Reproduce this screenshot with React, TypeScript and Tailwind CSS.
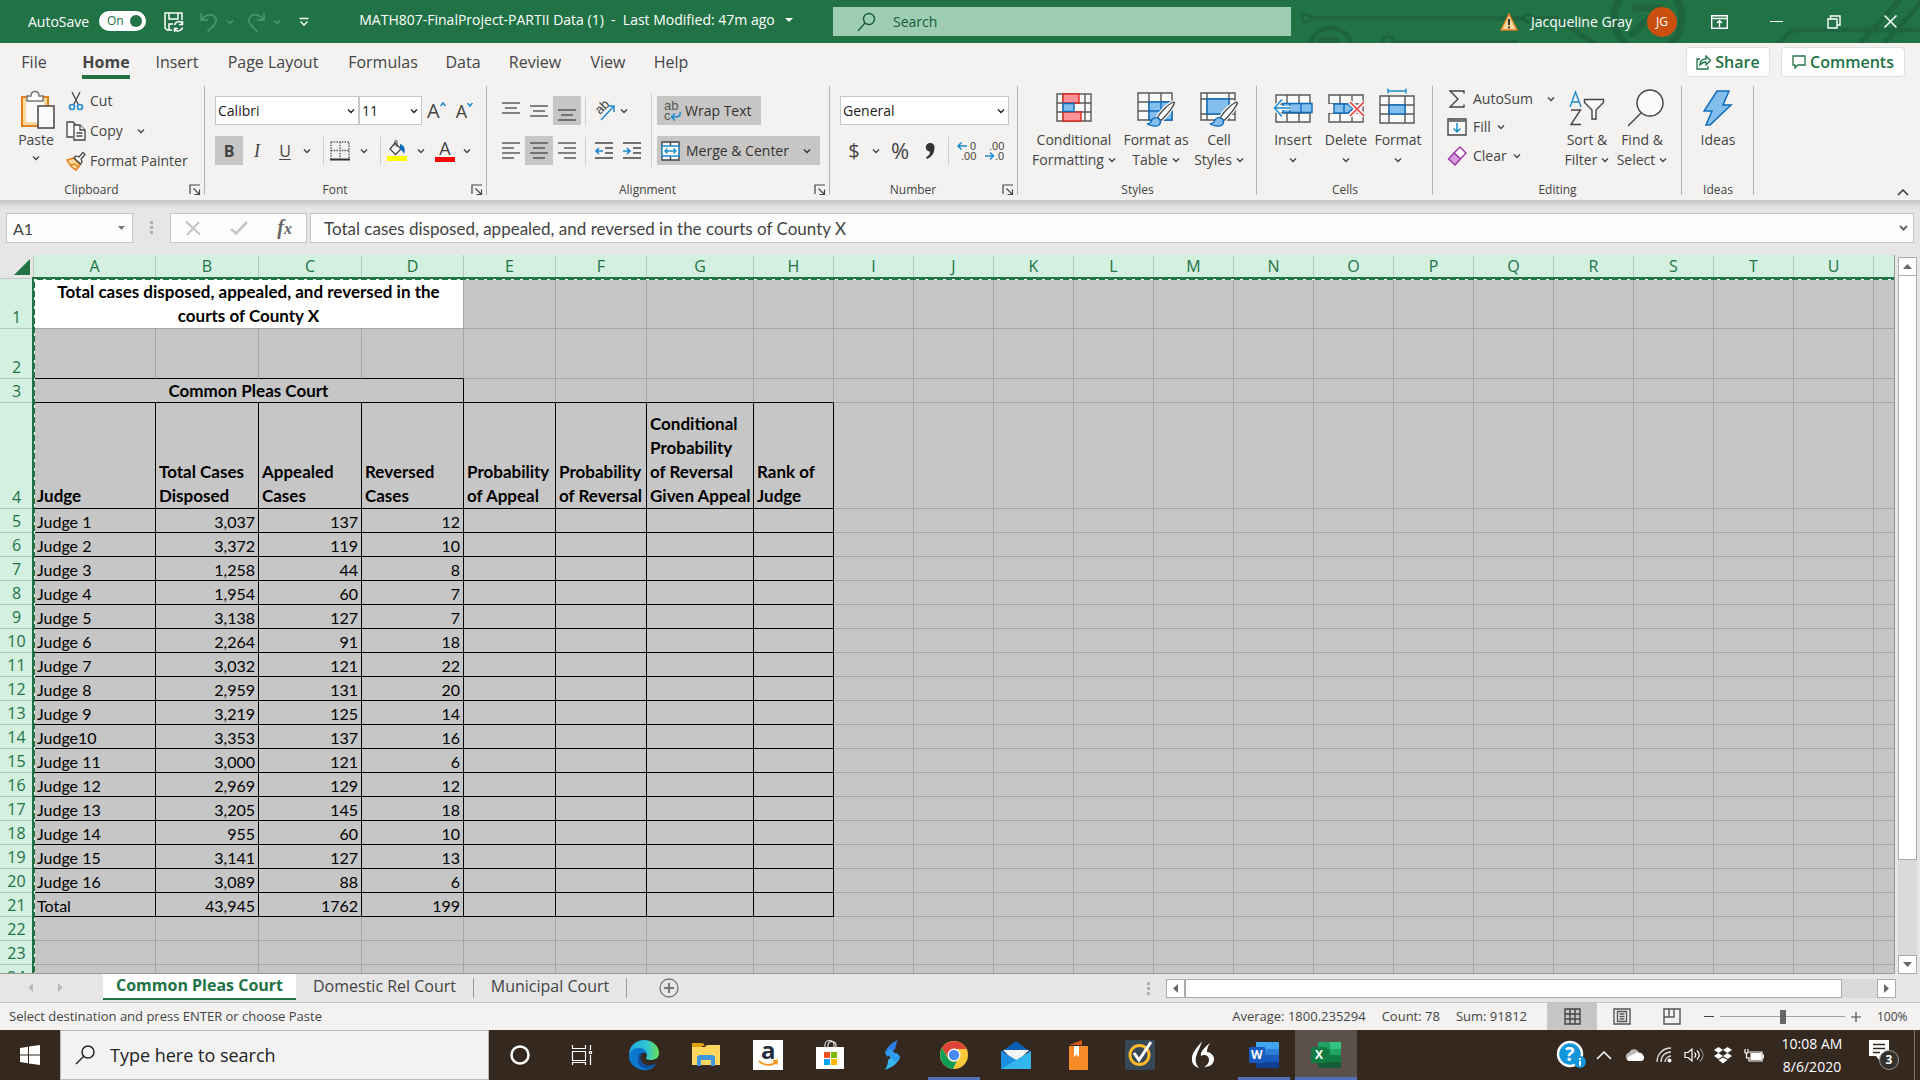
import React, { useState } from 'react';

type Row = [string, string, string, string];

const ROWS: Row[] = [
  ['Judge 1', '3,037', '137', '12'],
  ['Judge 2', '3,372', '119', '10'],
  ['Judge 3', '1,258', '44', '8'],
  ['Judge 4', '1,954', '60', '7'],
  ['Judge 5', '3,138', '127', '7'],
  ['Judge 6', '2,264', '91', '18'],
  ['Judge 7', '3,032', '121', '22'],
  ['Judge 8', '2,959', '131', '20'],
  ['Judge 9', '3,219', '125', '14'],
  ['Judge10', '3,353', '137', '16'],
  ['Judge 11', '3,000', '121', '6'],
  ['Judge 12', '2,969', '129', '12'],
  ['Judge 13', '3,205', '145', '18'],
  ['Judge 14', '955', '60', '10'],
  ['Judge 15', '3,141', '127', '13'],
  ['Judge 16', '3,089', '88', '6'],
  ['Total', '43,945', '1762', '199'],
];

const HEADINGS = [
  'Judge',
  'Total Cases\nDisposed',
  'Appealed\nCases',
  'Reversed\nCases',
  'Probability\nof Appeal',
  'Probability\nof Reversal',
  'Conditional\nProbability\nof Reversal\nGiven Appeal',
  'Rank of\nJudge',
];

const COLUMNS = [
  { name: 'A', width: 'w-[122px]' },
  { name: 'B', width: 'w-[103px]' },
  { name: 'C', width: 'w-[103px]' },
  { name: 'D', width: 'w-[102px]' },
  { name: 'E', width: 'w-[92px]' },
  { name: 'F', width: 'w-[91px]' },
  { name: 'G', width: 'w-[107px]' },
  { name: 'H', width: 'w-[80px]' },
  ...'IJKLMNOPQRSTU'.split('').map((name) => ({ name, width: 'w-[80px]' })),
];

const MENU = [
  { name: 'File', width: 'w-[68px]' },
  { name: 'Home', width: 'w-[76px]' },
  { name: 'Insert', width: 'w-[66px]' },
  { name: 'Page Layout', width: 'w-[126px]' },
  { name: 'Formulas', width: 'w-[94px]' },
  { name: 'Data', width: 'w-[66px]' },
  { name: 'Review', width: 'w-[78px]' },
  { name: 'View', width: 'w-[68px]' },
  { name: 'Help', width: 'w-[58px]' },
];

const Chevron = ({ className = '' }: { className?: string }) => (
  <svg className={`w-2 h-2 shrink-0 ${className}`} viewBox="0 0 8 8" fill="none" stroke="currentColor" strokeWidth="1.4">
    <path d="M1 2.5l3 3 3-3" />
  </svg>
);

const Launcher = ({ label }: { label: string }) => (
  <button aria-label={label} className="absolute right-1 bottom-1">
    <svg className="w-3 h-3" viewBox="0 0 12 12" fill="none" stroke="#444" strokeWidth="1.2">
      <path d="M1 10V1h10M4.5 4.5l6 6M10.5 5.5v5h-5" />
    </svg>
  </button>
);

const Group = ({ label, width, launcher, children }: { label: string; width: string; launcher?: boolean; children: React.ReactNode }) => (
  <section
    aria-label={label}
    className={`relative flex flex-col justify-between h-full shrink-0 after:absolute after:right-0 after:top-0 after:w-px after:h-[109px] after:bg-[#b4b2b0] ${width}`}
  >
    {children}
    <div className={`text-xs leading-4 text-center pb-0.5 text-[#444] ${launcher ? 'pr-[22px]' : ''}`}>{label}</div>
    {launcher && <Launcher label={`${label} settings`} />}
  </section>
);

const Divider = () => <div className="w-px h-7 bg-[#cfcdcb] shrink-0" />;

const Lines = ({ rows }: { rows: [number, number, number][] }) => (
  <svg className="w-[18px] h-5" viewBox="0 0 18 20" stroke="#444" strokeWidth="1.3">
    {rows.map(([x1, x2, y]) => (
      <line key={y} x1={x1} x2={x2} y1={y} y2={y} />
    ))}
  </svg>
);

const IconButton = ({ label, active, width = 'w-7', children }: { label: string; active?: boolean; width?: string; children: React.ReactNode }) => (
  <button aria-label={label} className={`h-[29px] flex items-center justify-center shrink-0 ${width} ${active ? 'bg-[#c8c6c4]' : ''}`}>
    {children}
  </button>
);

const BigButton = ({ lines, width, icon, arrow = 'inline' }: { lines: string[]; width: string; icon: React.ReactNode; arrow?: 'inline' | 'below' | 'none' }) => (
  <button className={`flex flex-col items-center text-sm leading-5 shrink-0 ${width}`}>
    <span className="h-[44px] flex items-center">{icon}</span>
    <span>{lines[0]}</span>
    {lines[1] && (
      <span className="flex items-center gap-1 whitespace-nowrap">
        {lines[1]}
        {arrow === 'inline' && <Chevron />}
      </span>
    )}
    {arrow === 'below' && <Chevron className="mt-1.5" />}
  </button>
);

/* ---- ribbon drawings ---- */

const GridLines = () => <path d="M1 1h34v27H1zM1 10h34M1 19h34M12 1v27M24 1v27" fill="#fafafa" stroke="#5a5856" strokeWidth="1.4" />;

const BrushIcon = () => (
  <g>
    <path d="M36.5 10c-5 2-13 10-16 15.5l3.5 3C29 24 36 15 37.5 11z" fill="#fff" stroke="#f3f2f1" strokeWidth="4" />
    <path d="M36.5 10c-5 2-13 10-16 15.5l3.5 3C29 24 36 15 37.5 11z" fill="#fff" stroke="#444" strokeWidth="1.3" />
    <path d="M10 32c3 0 4-1.5 5-4 1-2.5 5-4 8 0 2 4-2 6.5-6 6-3 0-5-1-7-2z" fill="#83beec" stroke="#0f6cbd" strokeWidth="1.3" />
  </g>
);

const ConditionalIcon = () => (
  <svg className="w-9 h-[30px]" viewBox="0 0 36 30">
    <path d="M1 1h34v27H1zM1 10h34M1 19h34M7 1v27M29 1v27" fill="#fafafa" stroke="#5a5856" strokeWidth="1.4" />
    <path d="M7 1h16v9H7zM7 19h18v9H7z" fill="#ff9297" stroke="#d92c20" strokeWidth="1.4" />
    <path d="M7 10.5h11v8H7z" fill="#83beec" stroke="#0f6cbd" strokeWidth="1.4" />
  </svg>
);

const TableStyleIcon = () => (
  <svg className="w-[39px] h-9 mt-1" viewBox="0 0 39 36">
    <GridLines />
    <path d="M12 10h23v18H12zM12 19h23M24 10v18" fill="#83beec" stroke="#0f6cbd" strokeWidth="1.4" />
    <BrushIcon />
  </svg>
);

const CellStyleIcon = () => (
  <svg className="w-[39px] h-9 mt-1" viewBox="0 0 39 36">
    <path d="M1 1h34v27H1zM1 7h34M1 22h34M7 1v27M29 1v27" fill="#fafafa" stroke="#5a5856" strokeWidth="1.4" />
    <path d="M7 7h22v15H7z" fill="#83beec" stroke="#0f6cbd" strokeWidth="1.4" />
    <BrushIcon />
  </svg>
);

const InsertCellsIcon = () => (
  <svg className="w-10 h-9" viewBox="0 0 40 36">
    <g transform="translate(2 4)"><GridLines /></g>
    <path d="M10 13.5h29v9H10zM17 13.5v9M28 13.5v9" fill="#83beec" stroke="#0f6cbd" strokeWidth="1.4" />
    <path d="M9 9.5L1 18l8 8.5M1 18h17" fill="none" stroke="#f3f2f1" strokeWidth="4" />
    <path d="M9 9.5L1.5 18 9 26.5M2 18h16" fill="none" stroke="#1e8bcd" strokeWidth="1.5" />
  </svg>
);

const DeleteCellsIcon = () => (
  <svg className="w-10 h-9" viewBox="0 0 40 36">
    <g transform="translate(2 4)"><GridLines /></g>
    <path d="M1 14h6v9H1z" fill="#f3f2f1" />
    <path d="M8 14h14l5 4.5-5 4.5H8zM18 14v9" fill="#83beec" stroke="#0f6cbd" strokeWidth="1.4" />
    <path d="M24 12l14 14M38 12L24 26" stroke="#f3f2f1" strokeWidth="5" />
    <path d="M24 12l14 14M38 12L24 26" stroke="#e8413c" strokeWidth="1.5" />
  </svg>
);

const FormatCellsIcon = () => (
  <svg className="w-10 h-10" viewBox="0 0 40 40">
    <path d="M10 3h18M10 .5v5M28 .5v5" stroke="#1e8bcd" strokeWidth="1.4" />
    <path d="M2 8h34v27H2zM2 17h34M2 26h34M11 8v27M27 8v27" fill="#fafafa" stroke="#5a5856" strokeWidth="1.4" />
    <path d="M11 17h16v9H11z" fill="#83beec" stroke="#0f6cbd" strokeWidth="1.4" />
  </svg>
);

const ClipboardGroup = () => (
  <Group label="Clipboard" width="w-[205px]" launcher>
    <div className="flex">
      <button className="w-[66px] shrink-0 pl-[6px] flex flex-col items-center text-sm leading-5 pt-1">
        <svg className="w-9 h-10 ml-1" viewBox="0 0 36 40" fill="none">
          <path d="M2 7h26v29H2z" fill="#fbd89b" stroke="#e0801f" strokeWidth="2" />
          <path d="M6 11h18v21H6z" fill="#fafafa" />
          <path d="M7 11V6h4c0-6 8-6 8 0h4v5z" fill="#fff" stroke="#777" strokeWidth="1.5" />
          <path d="M18 16h16v22H18z" fill="#fafafa" stroke="#444" strokeWidth="1.5" />
        </svg>
        <span>Paste</span>
        <Chevron className="mt-1" />
      </button>
      <div className="flex flex-col text-sm">
        <button className="h-[30px] flex items-center gap-1">
          <svg className="w-5 h-5" viewBox="0 0 20 20" fill="none" strokeWidth="1.3">
            <path d="M6 1l6.5 13M14 1L7.5 14" stroke="#444" />
            <circle cx="6" cy="16" r="2.5" stroke="#1e8bcd" strokeWidth="1.6" />
            <circle cx="14" cy="16" r="2.5" stroke="#1e8bcd" strokeWidth="1.6" />
          </svg>
          Cut
        </button>
        <button className="h-[30px] flex items-center gap-1">
          <svg className="w-5 h-5" viewBox="0 0 20 20" fill="#fafafa" stroke="#444" strokeWidth="1.3">
            <path d="M7 16H1V1h6l3 3" />
            <path d="M8 4h6l5 5v10H8z" />
            <path d="M14 4v5h5M10.5 12h6M10.5 15h6" />
          </svg>
          Copy
          <Chevron className="ml-2.5" />
        </button>
        <button className="h-[30px] flex items-center gap-1 whitespace-nowrap">
          <svg className="w-5 h-5" viewBox="0 0 20 20" strokeWidth="1.3">
            <path d="M1 9l7-2 6 7-4 5C6 17 3 13 1 9z" fill="#fbd89b" stroke="#e0801f" strokeWidth="1.6" />
            <path d="M5 14l4-1 3 3" fill="none" stroke="#e0801f" />
            <path d="M8 7l2-2 3 1 4-4.5 2 2L15 8l1 3-1.5 2z" fill="#fff" stroke="#444" />
          </svg>
          Format Painter
        </button>
      </div>
    </div>
  </Group>
);

const SelectBox = ({ label, value, width }: { label: string; value: string; width: string }) => (
  <div className={`relative h-[29px] ${width}`}>
    <select aria-label={label} defaultValue={value} className="appearance-none w-full h-full bg-white border border-[#c8c6c4] pl-[2px] text-sm text-[#222] outline-none">
      <option>{value}</option>
    </select>
    <Chevron className="absolute right-1 top-[11px] pointer-events-none text-[#222]" />
  </div>
);

const FontGroup = () => (
  <Group label="Font" width="w-[282px]" launcher>
    <div className="pl-[10px] pt-[10px] flex flex-col gap-[11px]">
      <div className="flex items-center">
        <SelectBox label="Font name" value="Calibri" width="w-[144px]" />
        <SelectBox label="Font size" value="11" width="w-[63px]" />
        <button aria-label="Increase font size" className="flex ml-[5px] text-xl leading-6">
          A<svg className="w-1.5 h-2 mt-0.5" viewBox="0 0 6 8" fill="none" stroke="#1e8bcd" strokeWidth="1.5"><path d="M.5 5L3 2l2.5 3" /></svg>
        </button>
        <button aria-label="Decrease font size" className="flex ml-2.5 text-lg leading-6">
          A<svg className="w-1.5 h-2 mt-0.5" viewBox="0 0 6 8" fill="none" stroke="#1e8bcd" strokeWidth="1.5"><path d="M.5 2L3 5l2.5-3" /></svg>
        </button>
      </div>
      <div className="flex items-center">
        <IconButton label="Bold" active><span className="text-base font-bold">B</span></IconButton>
        <IconButton label="Italic"><span className="text-lg italic font-['Liberation_Serif']">I</span></IconButton>
        <IconButton label="Underline"><span className="text-base underline underline-offset-2">U</span></IconButton>
        <Chevron className="mx-1" />
        <div className="w-2" />
        <Divider />
        <IconButton label="Borders" width="w-8">
          <svg className="w-5 h-5" viewBox="0 0 20 20" fill="none" stroke="#555" strokeWidth="1.3">
            <path d="M1 1h18v17M1 1v17M10 1v17M1 9.5h18" strokeDasharray="1.5 1.2" />
            <path d="M0 18.5h20" stroke="#333" strokeWidth="2" />
          </svg>
        </IconButton>
        <Chevron className="ml-1 mr-2" />
        <div className="w-1" />
        <Divider />
        <IconButton label="Fill color" width="w-8">
          <svg className="w-5 h-[22px]" viewBox="0 0 20 22" fill="none">
            <path d="M8 3l6 6-5.5 5.5L3 9z" fill="#fafafa" stroke="#444" strokeWidth="1.3" />
            <path d="M8 6V1.5C8 0 10 0 10 1.5V7" stroke="#444" />
            <path d="M13 4c4 1 6 5 4 10-1-2-2-4-4-5z" fill="#0f6cbd" />
            <path d="M0 16h20v5H0z" fill="#ff0" />
          </svg>
        </IconButton>
        <Chevron className="ml-1 mr-1" />
        <IconButton label="Font color" width="w-8">
          <span className="flex flex-col items-center text-lg leading-[18px]">A<i className="w-5 h-[5px] bg-[#f00]" /></span>
        </IconButton>
        <Chevron className="ml-0.5" />
      </div>
    </div>
  </Group>
);

const AlignmentGroup = () => (
  <Group label="Alignment" width="w-[343px]" launcher>
    <div className="flex pl-[10px]">
      <div className="pt-[10px] flex flex-col gap-[11px] w-[154px] shrink-0">
        <div className="flex items-center">
          <IconButton label="Top align"><Lines rows={[[0, 18, 2], [3, 15, 7], [0, 18, 12]]} /></IconButton>
          <IconButton label="Middle align"><Lines rows={[[0, 18, 5], [3, 15, 10], [0, 18, 15]]} /></IconButton>
          <IconButton label="Bottom align" active><Lines rows={[[0, 18, 9], [3, 15, 14], [0, 18, 19]]} /></IconButton>
          <div className="w-1" />
          <Divider />
          <div className="w-2" />
          <button aria-label="Orientation" className="flex items-center gap-1">
            <svg className="w-[22px] h-6 overflow-visible font-['Liberation_Sans']" viewBox="0 0 22 24" fill="none">
              <text fontSize="13" fill="#444" transform="translate(6 16) rotate(-45)">ab</text>
              <path d="M7 21L20 7M14 7h6v6" stroke="#1e8bcd" strokeWidth="1.5" />
            </svg>
            <Chevron />
          </button>
        </div>
        <div className="flex items-center">
          <IconButton label="Align left"><Lines rows={[[0, 18, 2], [0, 12, 7], [0, 18, 12], [0, 12, 17]]} /></IconButton>
          <IconButton label="Center" active><Lines rows={[[0, 18, 2], [3, 15, 7], [0, 18, 12], [3, 15, 17]]} /></IconButton>
          <IconButton label="Align right"><Lines rows={[[0, 18, 2], [6, 18, 7], [0, 18, 12], [6, 18, 17]]} /></IconButton>
          <div className="w-1" />
          <Divider />
          <div className="w-1" />
          <IconButton label="Decrease indent">
            <svg className="w-[18px] h-5" viewBox="0 0 18 20" fill="none" strokeWidth="1.4" stroke="#444">
              <path d="M0 2h18M10 7h8M10 12h8M0 17h18" />
              <path d="M8 10H1M4 7l-3 3 3 3" stroke="#1e8bcd" strokeWidth="1.7" />
            </svg>
          </IconButton>
          <IconButton label="Increase indent">
            <svg className="w-[18px] h-5" viewBox="0 0 18 20" fill="none" strokeWidth="1.4" stroke="#444">
              <path d="M0 2h18M10 7h8M10 12h8M0 17h18" />
              <path d="M0 10h7M4 7l3 3-3 3" stroke="#1e8bcd" strokeWidth="1.7" />
            </svg>
          </IconButton>
        </div>
      </div>
      <div className="w-px h-[74px] mt-[7px] bg-[#cfcdcb] shrink-0" />
      <div className="pt-[10px] pl-[5px] flex flex-col gap-[11px] items-start text-sm text-[#333]">
        <button className="h-[29px] w-[104px] bg-[#c8c6c4] flex items-center pl-1.5 gap-1 whitespace-nowrap">
          <svg className="w-[18px] h-5 shrink-0 overflow-visible font-['Liberation_Sans']" viewBox="0 0 18 20" fill="none">
            <text x="1" y="9" fontSize="13" fill="#555">ab</text>
            <text x="1" y="19" fontSize="13" fill="#555">c</text>
            <path d="M17 11c1 3-1 5-4 5H9M12 12.5L8.5 16l3.5 3.5" stroke="#1e8bcd" strokeWidth="1.6" />
          </svg>
          Wrap Text
        </button>
        <button className="h-[29px] w-[163px] bg-[#c8c6c4] flex items-center pl-1 gap-1.5 whitespace-nowrap">
          <svg className="w-[19px] h-5 shrink-0" viewBox="0 0 19 20" fill="none">
            <path d="M1 1h17v18H1zM9.5 1v18" fill="#fafafa" stroke="#444" strokeWidth="1.4" />
            <path d="M1 5h17v10H1z" fill="#fff" stroke="#1e8bcd" strokeWidth="1.5" />
            <path d="M4 10h11M6.5 7.5L4 10l2.5 2.5M12.5 7.5L15 10l-2.5 2.5" stroke="#1e8bcd" strokeWidth="1.4" />
          </svg>
          Merge &amp; Center
          <Chevron className="ml-2" />
        </button>
      </div>
    </div>
  </Group>
);

const DecimalIcon = ({ more }: { more?: boolean }) => (
  <svg className="w-5 h-5 overflow-visible font-['Liberation_Sans']" viewBox="0 0 20 20" fill="none">
    <text x={more ? 13 : 4} y="9" fontSize="11" fill="#444">{more ? '0' : '.00'}</text>
    <text x={more ? 4 : 10} y="19" fontSize="11" fill="#444">{more ? '.00' : '.0'}</text>
    {more ? <path d="M10 5H1M4.5 1.5L1 5l3.5 3.5" stroke="#1e8bcd" strokeWidth="1.5" /> : <path d="M0 15h8M5 11.5L8.5 15 5 18.5" stroke="#1e8bcd" strokeWidth="1.5" />}
  </svg>
);

const NumberGroup = () => (
  <Group label="Number" width="w-[188px]" launcher>
    <div className="pl-[10px] pt-[10px] flex flex-col gap-[11px]">
      <SelectBox label="Number format" value="General" width="w-[169px]" />
      <div className="flex items-center w-[169px]">
        <IconButton label="Accounting format"><span className="text-xl">$</span></IconButton>
        <Chevron className="ml-1 mr-1" />
        <IconButton label="Percent style" width="w-8"><span className="text-[22px]">%</span></IconButton>
        <IconButton label="Comma style" width="w-7">
          <svg className="w-3 h-5" viewBox="0 0 12 20" fill="#333"><path d="M6 2a4 4 0 014.5 4.5C10.5 12 8 15.5 3 18l-1-1.5c3-2 4-3.5 4-6A4.2 4.2 0 116 2z" /></svg>
        </IconButton>
        <div className="w-1" />
        <Divider />
        <div className="w-1" />
        <IconButton label="Increase decimal"><DecimalIcon more /></IconButton>
        <IconButton label="Decrease decimal"><DecimalIcon /></IconButton>
      </div>
    </div>
  </Group>
);

const EditingGroup = () => (
  <Group label="Editing" width="w-[249px]">
    <div className="flex">
      <div className="w-[126px] pl-[14px] flex flex-col text-sm">
        <button className="h-[26px] flex items-center gap-1.5">
          <svg className="w-5 h-5" viewBox="0 0 20 20" fill="none" stroke="#444" strokeWidth="1.4"><path d="M17 4.5V2H3l8 8-8 8h14v-2.5" /></svg>
          AutoSum
          <Chevron className="ml-2" />
        </button>
        <button className="h-[30px] flex items-center gap-1.5">
          <svg className="w-5 h-5" viewBox="0 0 20 20" fill="none"><path d="M1 2h18v16H1z" fill="#fafafa" stroke="#444" strokeWidth="1.4" /><path d="M1 4h18" stroke="#777" strokeWidth="2" /><path d="M10 6v9M6.5 11.5L10 15l3.5-3.5" stroke="#1e8bcd" strokeWidth="1.5" /></svg>
          Fill <Chevron />
        </button>
        <button className="h-[28px] flex items-center gap-1.5">
          <svg className="w-5 h-5" viewBox="0 0 20 20" fill="none" stroke="#9b35a5" strokeWidth="1.4"><path d="M13 1l6 6-5.5 6L7 7z" fill="#fafafa" /><path d="M7 7l6.5 6L8 19l-6.5-6z" fill="#d59cdb" /></svg>
          Clear <Chevron />
        </button>
      </div>
      <BigButton
        lines={['Sort &', 'Filter']}
        width="w-[56px]"
        icon={
          <svg className="w-9 h-9" viewBox="0 0 36 36" fill="none" strokeWidth="1.4">
            <path d="M1 17L6.5 2 12 17M3 12h7" stroke="#1e8bcd" />
            <path d="M2 20h9.5L2 34.5h10" stroke="#444" />
            <path d="M15.5 9.5h19v3L27 20v9h-4v-9l-7.5-7.5z" fill="#fafafa" stroke="#444" />
          </svg>
        }
      />
      <BigButton
        lines={['Find &', 'Select']}
        width="w-[54px]"
        icon={
          <svg className="w-9 h-[38px] ml-2" viewBox="0 0 36 38" fill="none" stroke="#444" strokeWidth="1.4"><circle cx="22" cy="14" r="13" fill="#fafafa" /><path d="M13 24L0 37" /></svg>
        }
      />
    </div>
  </Group>
);

const Ribbon = () => (
  <div className="relative flex h-[114px] bg-[#f3f2f1] text-[#444] shrink-0">
    <ClipboardGroup />
    <FontGroup />
    <AlignmentGroup />
    <NumberGroup />
    <Group label="Styles" width="w-[239px]">
      <div className="flex pl-[10px]">
        <BigButton lines={['Conditional', 'Formatting']} width="w-[92px]" icon={<ConditionalIcon />} />
        <BigButton lines={['Format as', 'Table']} width="w-[72px]" icon={<TableStyleIcon />} />
        <BigButton lines={['Cell', 'Styles']} width="w-[54px]" icon={<CellStyleIcon />} />
      </div>
    </Group>
    <Group label="Cells" width="w-[176px]">
      <div className="flex pl-[9px]">
        <BigButton lines={['Insert']} width="w-[54px]" arrow="below" icon={<InsertCellsIcon />} />
        <BigButton lines={['Delete']} width="w-[52px]" arrow="below" icon={<DeleteCellsIcon />} />
        <BigButton lines={['Format']} width="w-[52px]" arrow="below" icon={<FormatCellsIcon />} />
      </div>
    </Group>
    <EditingGroup />
    <Group label="Ideas" width="w-[72px]">
      <BigButton
        lines={['Ideas']}
        width="w-full"
        arrow="none"
        icon={
          <svg className="w-[30px] h-9" viewBox="0 0 30 36"><path d="M14 1h12l-6 14h8L7 35H3l6-14H1z" fill="#83beec" stroke="#0f6cbd" strokeWidth="1.5" /></svg>
        }
      />
    </Group>
    <button aria-label="Collapse ribbon" className="absolute right-[11px] bottom-1">
      <svg className="w-3 h-2" viewBox="0 0 12 8" fill="none" stroke="#333" strokeWidth="1.5"><path d="M1 7l5-5 5 5" /></svg>
    </button>
  </div>
);

const TitleBar = () => (
  <header className="relative h-[43px] bg-[#217346] text-white text-sm flex items-center overflow-hidden shrink-0">
    <svg className="absolute right-0 top-0 w-[620px] h-[43px]" viewBox="0 0 620 43" fill="none" stroke="#1e653f" strokeWidth="5">
      <circle cx="6" cy="18" r="4" strokeWidth="3" />
      <path d="M10 18h214" />
      <circle cx="228" cy="18" r="4" strokeWidth="3" />
      <path d="M232 18h24l40 27" />
      <circle cx="31" cy="49" r="21" />
      <path d="M19 40h20" strokeWidth="6" />
      <circle cx="88" cy="41" r="5" strokeWidth="3" />
      <path d="M93 42h125" strokeWidth="4" />
      <circle cx="348" cy="18" r="34" strokeWidth="7" />
      <path d="M333 8h26v24M357 10L330 36" strokeWidth="7" />
      <path d="M478 44l14-14h128M560 43L600 0M584 43L622 2" />
    </svg>
    <div className="relative flex items-center w-[341px] shrink-0">
      <label htmlFor="autosave" className="pl-7 w-[99px] whitespace-nowrap">AutoSave</label>
      <div className="relative w-[47px] h-5 -mt-0.5">
        <input id="autosave" type="checkbox" defaultChecked className="appearance-none block w-full h-full rounded-full bg-white" />
        <span className="absolute left-2 top-0.5 text-xs leading-4 text-[#217346] pointer-events-none">On</span>
        <span className="absolute right-1 top-1 w-3 h-3 rounded-full bg-[#217346] pointer-events-none" />
      </div>
      <button aria-label="Save" className="ml-[18px]">
        <svg className="w-5 h-5" viewBox="0 0 20 20" fill="none" stroke="#fff" strokeWidth="1.5">
          <path d="M8 18H3l-2-2V1h17v7M5 1v6h9V1M5 18v-6h4" />
          <path d="M18.5 11.5a4.5 4.5 0 00-8 1.5M18.5 9v3.5H15M10.5 17a4.5 4.5 0 008-1.5M10.5 20v-3.5H14" />
        </svg>
      </button>
      <button aria-label="Undo" className="ml-4 flex items-center gap-2 text-[#4f9a70]">
        <svg className="w-[18px] h-5" viewBox="0 0 18 20" fill="none" stroke="currentColor" strokeWidth="1.5"><path d="M1 1v7h7M1.5 7.5C5 3 11 1 14.5 4.5c4 4 1 8-7 15" /></svg>
        <Chevron />
      </button>
      <button aria-label="Redo" className="ml-[13px] flex items-center gap-2 text-[#4f9a70]">
        <svg className="w-[18px] h-5" viewBox="0 0 18 20" fill="none" stroke="currentColor" strokeWidth="1.5"><path d="M17 1v7h-7M16.5 7.5C13 3 7 1 3.5 4.5c-4 4-1 8 7 15" /></svg>
        <Chevron />
      </button>
      <button aria-label="Customize toolbar" className="ml-[18px]">
        <svg className="w-2.5 h-2.5" viewBox="0 0 10 10" fill="none" stroke="#fff" strokeWidth="1.4"><path d="M.5 1.5h9M1.5 4.5L5 8l3.5-3.5" /></svg>
      </button>
    </div>
    <button className="relative flex items-center justify-center gap-2.5 w-[470px] shrink-0 whitespace-pre pb-1">
      {'MATH807-FinalProject-PARTII Data (1)  -  Last Modified: 47m ago'}
      <svg className="w-2 h-1" viewBox="0 0 8 4" fill="#fff"><path d="M0 0h8L4 4z" /></svg>
    </button>
    <label className="relative ml-[22px] w-[458px] h-[29px] bg-[#9fcdb3] text-[#185c37] flex items-center gap-4 pl-6">
      <svg className="w-5 h-5" viewBox="0 0 20 20" fill="none" stroke="currentColor" strokeWidth="1.4"><circle cx="12" cy="7" r="5.5" /><path d="M8 11L1 19" /></svg>
      <input aria-label="Search" placeholder="Search" className="bg-transparent outline-none placeholder:text-[#185c37] w-[300px]" />
    </label>
    <div className="relative ml-auto flex items-center">
      <svg className="w-[18px] h-[18px] mr-[13px]" viewBox="0 0 18 18"><path d="M9 1l8 16H1z" fill="#fbd89b" stroke="#e0801f" strokeWidth="1.4" /><path d="M9 6v6M9 13.5v2" stroke="#222" strokeWidth="1.8" /></svg>
      <span className="w-[103px] whitespace-nowrap">Jacqueline Gray</span>
      <button aria-label="Account" className="ml-[13px] w-[30px] h-[30px] rounded-full bg-[#ca5010] text-xs">JG</button>
      <button aria-label="Ribbon display options" className="ml-[34px]">
        <svg className="w-[17px] h-[14px]" viewBox="0 0 17 14" fill="none" stroke="#fff" strokeWidth="1.4"><path d="M.7.7h15.6v12.6H.7zM1 3.5h15M8.5 12V6M6 8l2.5-2.5L11 8" /></svg>
      </button>
      <button aria-label="Minimize" className="ml-[42px] w-[13px] h-px bg-white" />
      <button aria-label="Restore" className="ml-11">
        <svg className="w-[14px] h-[14px]" viewBox="0 0 14 14" fill="none" stroke="#fff" strokeWidth="1.4"><path d="M1 4h9v9H1zM3.5 4V1H13v9h-3" /></svg>
      </button>
      <button aria-label="Close" className="ml-[43px] mr-[23px]">
        <svg className="w-[13px] h-[13px]" viewBox="0 0 13 13" stroke="#fff" strokeWidth="1.5"><path d="M.5.5l12 12M12.5.5l-12 12" /></svg>
      </button>
    </div>
  </header>
);

const MenuBar = () => (
  <div className="h-[43px] bg-[#f3f2f1] flex items-start justify-between text-[#444] shrink-0">
    <nav className="flex pt-[7px]">
      {MENU.map((m) => (
        <button key={m.name} className={`text-base leading-6 flex flex-col items-center whitespace-nowrap ${m.width} ${m.name === 'Home' ? 'font-bold' : ''}`}>
          {m.name}
          {m.name === 'Home' && <span className="w-12 h-1 mt-px bg-[#217346]" />}
        </button>
      ))}
    </nav>
    <div className="flex gap-[11px] pt-1 pr-[15px] text-base font-semibold text-[#217346]">
      <button className="h-[30px] w-[84px] bg-white border border-[#e1dfdd] rounded-sm flex items-center justify-center gap-1">
        <svg className="w-[15px] h-[15px]" viewBox="0 0 15 15" fill="none" stroke="currentColor" strokeWidth="1.3"><path d="M4 4H1v10h11v-3" /><path d="M4 10c0-4 2-6 6-6V1l4.5 4.5L10 10V7C7 7 5.5 8 4 10z" /></svg>
        Share
      </button>
      <button className="h-[30px] w-[124px] bg-white border border-[#e1dfdd] rounded-sm flex items-center justify-center gap-1">
        <svg className="w-[14px] h-[14px]" viewBox="0 0 14 14" fill="none" stroke="currentColor" strokeWidth="1.3"><path d="M1 1h12v9H6l-3 3v-3H1z" /></svg>
        Comments
      </button>
    </div>
  </div>
);

const FormulaBar = () => (
  <div className="h-[55px] bg-[#e6e6e6] flex items-start pt-[13px] pl-1.5 pr-1.5 shadow-[inset_0_8px_6px_-5px_#bbb] shrink-0">
    <div className="relative w-[127px] h-[30px]">
      <input aria-label="Name box" defaultValue="A1" className="w-full h-full bg-[#fdfdfd] border border-[#c6c6c6] px-1.5 font-[Lato] text-base text-[#444] outline-none" />
      <svg className="absolute right-2 top-[13px] w-[7px] h-1" viewBox="0 0 7 4" fill="#777"><path d="M0 0h7L3.5 4z" /></svg>
    </div>
    <svg className="w-[3px] h-[13px] mt-2 mx-[17px]" viewBox="0 0 3 13" fill="#b0b0b0"><path d="M0 0h3v3H0zM0 5h3v3H0zM0 10h3v3H0z" /></svg>
    <div className="w-[137px] h-[30px] bg-[#fdfdfd] border border-[#c6c6c6] flex items-center justify-between px-[14px]">
      <button aria-label="Cancel"><svg className="w-4 h-4" viewBox="0 0 16 16" stroke="#c4c4c4" strokeWidth="2"><path d="M1 1.5l14 13M14 2L2 15" /></svg></button>
      <button aria-label="Enter"><svg className="w-[18px] h-4" viewBox="0 0 18 16" fill="none" stroke="#c4c4c4" strokeWidth="2.6"><path d="M1 9l5 4.5L17 2" /></svg></button>
      <button aria-label="Insert function" className="font-['Liberation_Serif'] italic font-bold text-xl leading-6 text-[#666]">f<span className="text-base">x</span></button>
    </div>
    <div className="relative ml-[3px] flex-1 h-[30px]">
      <input aria-label="Formula" defaultValue="Total cases disposed, appealed, and reversed in the courts of County X" className="w-full h-full bg-[#fdfdfd] border border-[#c6c6c6] pl-[13px] font-[Lato] text-[17px] text-[#444] outline-none" />
      <svg className="absolute right-1.5 top-3 w-[9px] h-1.5" viewBox="0 0 9 6" fill="none" stroke="#666" strokeWidth="2"><path d="M1 1l3.5 3.5L8 1" /></svg>
    </div>
  </div>
);

const RowHead = ({ n }: { n: number }) => (
  <th scope="row" className="border-r border-b border-[#b5c9be] bg-[#d3f0e0] text-[#217346] font-['Open_Sans'] text-base leading-[22px] font-normal align-bottom text-center p-0">{n}</th>
);

const Blank = ({ count, line = 'border-[#a6a6a6]' }: { count: number; line?: string }) => (
  <>
    {Array.from({ length: count }, (_, i) => (
      <td key={i} className={`border-r border-b ${line}`} />
    ))}
  </>
);

const Sheet = () => (
  <div className="relative flex-1 min-w-0 overflow-hidden border-r border-b border-[#999]">
    <table className="table-fixed border-separate border-spacing-0 w-[1954px] bg-[#c6c6c6] font-[Lato] text-base text-black">
      <colgroup>
        <col className="w-[34px]" />
        {COLUMNS.map((c) => (
          <col key={c.name} className={c.width} />
        ))}
        <col className="w-[80px]" />
      </colgroup>
      <thead className="font-['Open_Sans'] text-[#217346]">
        <tr className="h-6">
          <th aria-label="Select all" className="bg-[#e6e6e6] border-r border-b border-[#c6c6c6] p-0 align-bottom">
            <svg className="w-4 h-4 ml-[14px] mb-[3px] block" viewBox="0 0 16 16" fill="#217346"><path d="M16 0v16H0z" /></svg>
          </th>
          {COLUMNS.map((c) => (
            <th key={c.name} scope="col" className="bg-[#d3f0e0] border-r border-b border-[#b5c9be] font-normal p-0 leading-[23px]">{c.name}</th>
          ))}
          <th className="bg-[#d3f0e0] border-b border-[#b5c9be] p-0" />
        </tr>
      </thead>
      <tbody>
        <tr className="h-[50px]">
          <RowHead n={1} />
          <td colSpan={4} className="bg-white border-r border-b border-[#a6a6a6] text-center text-[17px] leading-6 font-bold p-0 px-4 align-bottom">
            Total cases disposed, appealed, and reversed in the courts of County X
          </td>
          <Blank count={18} />
        </tr>
        <tr className="h-[50px]">
          <RowHead n={2} />
          <Blank count={4} line="border-r-[#a6a6a6] border-b-black" />
          <Blank count={18} />
        </tr>
        <tr className="h-6">
          <RowHead n={3} />
          <td colSpan={4} className="border-r border-b border-black text-center text-[17px] font-bold p-0 leading-[23px]">Common Pleas Court</td>
          <Blank count={4} line="border-r-[#a6a6a6] border-b-black" />
          <Blank count={14} />
        </tr>
        <tr className="h-[106px]">
          <RowHead n={4} />
          {HEADINGS.map((h) => (
            <th key={h} className="border-r border-b border-black text-left text-[17px] leading-6 align-bottom font-bold whitespace-pre p-0 pl-[3px]">{h}</th>
          ))}
          <Blank count={14} />
        </tr>
        {ROWS.map((row, i) => (
          <tr key={row[0]} className="h-6">
            <RowHead n={i + 5} />
            {row.map((value, c) => (
              <td key={c} className={`border-r border-b border-black px-[3px] pt-0.5 pb-0 leading-[21px] ${c ? 'text-right' : ''}`}>{value}</td>
            ))}
            <Blank count={4} line="border-black" />
            <Blank count={14} />
          </tr>
        ))}
        {[22, 23, 24].map((n) => (
          <tr key={n} className="h-6">
            <RowHead n={n} />
            <Blank count={22} />
          </tr>
        ))}
      </tbody>
    </table>
    {/* selection outline with marching ants */}
    <div className="absolute left-8 right-0 top-[22px] h-[3px] bg-[#217346] pointer-events-none" />
    <div className="absolute left-[34px] right-0 top-6 h-px bg-[repeating-linear-gradient(90deg,#fff_0_3px,#217346_3px_9px)] pointer-events-none" />
    <div className="absolute left-8 top-[22px] bottom-0 w-[3px] bg-[#217346] pointer-events-none" />
    <div className="absolute left-[34px] top-6 bottom-0 w-px bg-[repeating-linear-gradient(180deg,#fff_0_3px,#217346_3px_9px)] pointer-events-none" />
  </div>
);

const Arrow = ({ d, color = '#666' }: { d: string; color?: string }) => (
  <svg className="w-[9px] h-[9px]" viewBox="0 0 9 9" fill={color}><path d={d} /></svg>
);

const VerticalScroll = () => (
  <div className="w-[22px] mr-[3px] pl-[3px] pt-0.5 flex flex-col">
    <button aria-label="Scroll up" className="h-[19px] bg-white border border-[#ababab] flex items-center justify-center"><Arrow d="M0 7h9L4.5 2z" /></button>
    <div className="flex-1 bg-[#dadada]"><div className="h-[86%] bg-white border border-t-0 border-[#ababab]" /></div>
    <button aria-label="Scroll down" className="h-[19px] bg-white border border-[#ababab] flex items-center justify-center"><Arrow d="M0 2h9L4.5 7z" /></button>
  </div>
);

const SheetTabs = () => {
  const [active, setActive] = useState('Common Pleas Court');
  const tabs = [
    { name: 'Common Pleas Court', width: 'w-[193px]' },
    { name: 'Domestic Rel Court', width: 'w-[178px]' },
    { name: 'Municipal Court', width: 'w-[153px]' },
  ];
  return (
    <div className="h-[29px] bg-[#e6e6e6] flex items-start border-b border-[#c6c6c6] shrink-0 text-[#444]">
      <div className="w-[103px] flex gap-[19px] pl-[27px] pt-[9px]">
        <button aria-label="Previous sheet"><Arrow d="M6 0v9L1.5 4.5z" color="#b8b8b8" /></button>
        <button aria-label="Next sheet"><Arrow d="M3 0v9l4.5-4.5z" color="#b8b8b8" /></button>
      </div>
      {tabs.map((t) => (
        <button
          key={t.name}
          onClick={() => setActive(t.name)}
          className={`text-base whitespace-nowrap ${t.width} ${
            active === t.name ? 'h-[26px] leading-[22px] pb-0.5 bg-white border-b-2 border-[#217346] text-[#217346] font-bold' : 'h-5 mt-1 leading-4 pb-1 border-r border-[#999]'
          }`}
        >
          {t.name}
        </button>
      ))}
      <button aria-label="New sheet" className="ml-8 mt-1">
        <svg className="w-5 h-5" viewBox="0 0 20 20" fill="none" stroke="#777" strokeWidth="1.3"><circle cx="10" cy="10" r="9" /><path d="M10 5v10M5 10h10" strokeWidth="2" /></svg>
      </button>
      <svg className="w-[3px] h-[13px] mt-2 ml-auto mr-4" viewBox="0 0 3 13" fill="#b0b0b0"><path d="M0 0h3v3H0zM0 5h3v3H0zM0 10h3v3H0z" /></svg>
      <div className="flex w-[38%] h-[19px] mt-[5px] mr-6">
        <button aria-label="Scroll left" className="w-[19px] bg-white border border-[#ababab] flex items-center justify-center"><Arrow d="M7 0v9L2 4.5z" /></button>
        <div className="flex-1 bg-[#dadada]"><div className="w-[95%] h-full bg-white border border-[#ababab]" /></div>
        <button aria-label="Scroll right" className="w-[19px] bg-white border border-[#ababab] flex items-center justify-center"><Arrow d="M2 0v9l5-4.5z" /></button>
      </div>
    </div>
  );
};

const StatusBar = () => (
  <div className="h-[27px] bg-[#f3f2f1] flex items-center text-[13px] text-[#444] pl-[9px] shrink-0">
    <span>Select destination and press ENTER or choose Paste</span>
    <div className="ml-auto flex items-center h-full">
      <span className="mr-4">Average: 1800.235294</span>
      <span className="mr-4">Count: 78</span>
      <span className="mr-5">Sum: 91812</span>
      <button aria-label="Normal view" className="w-[50px] h-full bg-[#c8c6c4] flex items-center justify-center">
        <svg className="w-[17px] h-[17px]" viewBox="0 0 17 17" fill="none" stroke="#444" strokeWidth="1.4"><path d="M1 1h15v15H1zM6 1v15M11 1v15M1 6h15M1 11h15" /></svg>
      </button>
      <button aria-label="Page layout view" className="w-[50px] flex justify-center">
        <svg className="w-[18px] h-[17px]" viewBox="0 0 18 17" fill="none" stroke="#555" strokeWidth="1.4"><path d="M1 1h16v15H1zM4.5 3.5h9v10h-9zM6.5 6h5M6.5 8.5h5M6.5 11h5" /></svg>
      </button>
      <button aria-label="Page break preview" className="w-[50px] flex justify-center">
        <svg className="w-[18px] h-[17px]" viewBox="0 0 18 17" fill="none" stroke="#555" strokeWidth="1.4"><path d="M1 1h16v15H1zM1 9h10V1M6 1v8" /></svg>
      </button>
      <button aria-label="Zoom out" className="ml-[7px] w-[10px] h-px bg-[#444]" />
      <input
        type="range"
        aria-label="Zoom"
        defaultValue={50}
        className="appearance-none ml-1.5 w-[125px] h-px bg-[#a0a0a0] [&::-webkit-slider-thumb]:appearance-none [&::-webkit-slider-thumb]:w-1.5 [&::-webkit-slider-thumb]:h-[14px] [&::-webkit-slider-thumb]:bg-[#666]"
      />
      <button aria-label="Zoom in" className="ml-1.5">
        <svg className="w-[10px] h-[10px]" viewBox="0 0 10 10" stroke="#444" strokeWidth="1.2"><path d="M5 0v10M0 5h10" /></svg>
      </button>
      <span className="ml-4 w-[43px] text-xs whitespace-nowrap">100%</span>
    </div>
  </div>
);

/* ---- taskbar ---- */

const APPS: { name: string; open?: boolean; active?: boolean; icon: React.ReactNode }[] = [
  { name: 'Cortana', icon: <circle cx="16" cy="16" r="8.5" fill="none" stroke="#fff" strokeWidth="2.5" /> },
  {
    name: 'Task View',
    icon: <path d="M6.5 6v3.5h13V6M6.5 12.5h13v9h-13zM6.5 26v-2.5h13V26M24.5 6v5M24.5 16v10M23.5 12.5h2v2h-2z" fill="none" stroke="#fff" strokeWidth="1.2" />,
  },
  {
    name: 'Edge',
    icon: (
      <>
        <defs>
          <linearGradient id="edgeTop" x1="0" x2="1"><stop offset="0" stopColor="#1fa7e0" /><stop offset=".6" stopColor="#30c5d2" /><stop offset="1" stopColor="#6be04f" /></linearGradient>
        </defs>
        <path d="M1 14C2 6 9 1 16 1c9 0 15 6 15 13 0 5-4 7-8 7-3 0-5-1-5-2 0-1 1-1 1-3 0-3-3-5-7-5S3 13 1 17z" fill="url(#edgeTop)" />
        <path d="M1 15c2-4 6-6 10-6 5 0 8 3 8 7-1-2-3-3-5-2-4 1-5 6-2 10 3 5 10 5 16 1-3 5-8 7-13 6C7 30 0 24 1 15z" fill="#0b78d0" />
        <path d="M11 15c-4 6 0 14 8 15 4-1 7-3 9-6-5 3-11 3-14-1-2-3-2-6 0-8-1-1-2-1-3 0z" fill="#104f9e" />
      </>
    ),
  },
  {
    name: 'File Explorer',
    icon: (
      <>
        <path d="M2 4h11l2 3h-3v4H2z" fill="#e0a10b" />
        <path d="M2 8h13l2-2h13v20H2z" fill="#ffd65e" />
        <path d="M7 27V18l2-2h14l2 2v9h-4v-6H11v6z" fill="#3f96dc" />
      </>
    ),
  },
  {
    name: 'Amazon',
    icon: (
      <>
        <path d="M1 1h30v30H1z" fill="#fff" />
        <text x="9" y="20" fontSize="24" fontWeight="700" fill="#232f3e">a</text>
        <path d="M7 22c5 5 13 5 17 1M21 22l4-.5-.5 4" fill="none" stroke="#f8991d" strokeWidth="1.8" />
      </>
    ),
  },
  {
    name: 'Microsoft Store',
    icon: (
      <>
        <path d="M11 9V6c0-6 9-6 9 0v3M14 9V6c0-5 8-4 8 0v3" fill="none" stroke="#ddd" strokeWidth="1.2" />
        <path d="M2 8h28v22H2z" fill="#fff" />
        <path d="M10 13h6v6h-6z" fill="#f25022" /><path d="M17 13h6v6h-6z" fill="#7fba00" />
        <path d="M10 20h6v6h-6z" fill="#00a4ef" /><path d="M17 20h6v6h-6z" fill="#ffb900" />
      </>
    ),
  },
  {
    name: 'Stream',
    icon: (
      <>
        <path d="M22 1c-2 3-2 6-3 9l-8 8-2-4c2-6 6-10 13-13z" fill="#2f7fe8" />
        <path d="M9 31c2-3 3-7 3-10l9-7 3 4c-2 6-7 10-15 13z" fill="#35b4ee" />
        <path d="M9 14l5-4 10 8-4 5z" fill="#2f9df2" />
      </>
    ),
  },
  {
    name: 'Chrome',
    open: true,
    icon: (
      <>
        <circle cx="16" cy="16" r="14" fill="#fbc83d" />
        <path d="M4 9a14 14 0 0124.5 1H16a6.5 6.5 0 00-6 8z" fill="#db4437" />
        <path d="M4 9l6.500 11A6.5 6.5 0 0019 22l-4 8A14 14 0 014 9z" fill="#0f9d58" />
        <circle cx="16" cy="16" r="6.500" fill="#fff" />
        <circle cx="16" cy="16" r="5.200" fill="#4a8af4" />
      </>
    ),
  },
  {
    name: 'Mail',
    icon: (
      <>
        <path d="M1 13L16 2l15 11z" fill="#0a5fb0" />
        <path d="M3 11h26L16 24z" fill="#f5f5f5" />
        <path d="M1 12l15 9 15-9v18H1z" fill="#35b5ee" />
        <path d="M1 12l15 9-15 9z" fill="#1c8fe0" />
      </>
    ),
  },
  {
    name: 'Reader',
    icon: (
      <>
        <path d="M7 6l13-5v5z" fill="#d4541a" />
        <path d="M7 7h19v24H7z" fill="#f68b28" />
        <path d="M12 7h5v11l-2.5-2.5L12 18z" fill="#fff" />
      </>
    ),
  },
  {
    name: 'Norton',
    icon: (
      <>
        <rect x="1" y="1" width="30" height="30" rx="2" fill="#364756" />
        <circle cx="15.5" cy="16" r="9.5" fill="none" stroke="#fdb927" strokeWidth="3" />
        <path d="M10 14l5 7L27 3" fill="none" stroke="#fff" strokeWidth="3" />
      </>
    ),
  },
  {
    name: 'Dragon',
    icon: (
      <path d="M16 2c-3 5-11 11-10 19 0 4 3 7 7 8-4-5-4-9-2-14 1-4 4-8 5-13zM24 4c-6 5-10 9-9 13 3-2 8-1 8 4 0 3-2 5-5 7 6 0 10-3 10-8 0-4-4-7-7-7 0-3 1-6 3-9z" fill="#fff" />
    ),
  },
  {
    name: 'Word',
    open: true,
    icon: (
      <>
        <path d="M8 3h23v7H8z" fill="#41a5ee" /><path d="M8 10h23v6H8z" fill="#2b7cd3" /><path d="M8 16h23v7H8z" fill="#185abd" /><path d="M8 23h23v6H8z" fill="#103f91" />
        <rect x="1" y="8" width="16" height="16" rx="1" fill="#185abd" />
        <text x="3" y="20" fontSize="12" fontWeight="700" fill="#fff">W</text>
      </>
    ),
  },
  {
    name: 'Excel',
    open: true,
    active: true,
    icon: (
      <>
        <path d="M8 3h12v7H8z" fill="#21a366" /><path d="M20 3h11v7H20z" fill="#33c481" /><path d="M8 10h12v6H8z" fill="#107c41" /><path d="M20 10h11v6H20z" fill="#21a366" /><path d="M8 16h23v7H8z" fill="#107c41" /><path d="M8 23h23v6H8z" fill="#185c37" />
        <rect x="1" y="8" width="16" height="16" rx="1" fill="#107c41" />
        <text x="5" y="20" fontSize="12" fontWeight="700" fill="#fff">X</text>
      </>
    ),
  },
];

const Taskbar = () => (
  <footer className="h-[50px] bg-[#34281f] flex items-stretch text-white shrink-0">
    <button aria-label="Start" className="w-[60px] flex items-center justify-center">
      <svg className="w-5 h-5" viewBox="0 0 20 20" fill="#fff"><path d="M0 3l8-1.2V9.5H0zM9 1.6L20 0v9.5H9zM0 10.5h8v7.7L0 17zM9 10.5h11V20L9 18.4z" /></svg>
    </button>
    <label className="w-[429px] bg-[#f2f2f2] border border-[#b9b9b9] flex items-center gap-[15px] pl-[14px] text-[#222]">
      <svg className="w-5 h-5" viewBox="0 0 20 20" fill="none" stroke="currentColor" strokeWidth="1.5"><circle cx="13" cy="7" r="6" /><path d="M8.5 11.5L1 19" /></svg>
      <input aria-label="Type here to search" placeholder="Type here to search" className="bg-transparent outline-none text-lg placeholder:text-[#222] w-[340px]" />
    </label>
    {APPS.map((a) => (
      <button key={a.name} aria-label={a.name} className={`relative w-[62px] flex items-center justify-center shrink-0 ${a.active ? 'bg-[#5c514a]' : ''}`}>
        <svg className="w-8 h-8" viewBox="0 0 32 32">{a.icon}</svg>
        {a.open && <span className={`absolute bottom-0 h-[3px] bg-[#5271b8] ${a.active ? 'inset-x-0' : 'inset-x-[5px]'}`} />}
      </button>
    ))}
    <div className="ml-auto flex items-center">
      <svg className="w-[30px] h-[30px] mr-2.5 overflow-visible" viewBox="0 0 30 30">
        <circle cx="14" cy="14" r="12" fill="#1296db" stroke="#fff" strokeWidth="2.5" />
        <text x="9" y="21" fontSize="20" fontWeight="700" fill="#fff">?</text>
        <circle cx="24" cy="22" r="6" fill="#1296db" />
        <path d="M24 18v2M24 21v5" stroke="#fff" strokeWidth="2" />
      </svg>
      <svg className="w-4 h-2.5 mr-3" viewBox="0 0 16 10" fill="none" stroke="#fff" strokeWidth="1.5"><path d="M1 9l7-7 7 7" /></svg>
      <svg className="w-5 h-[14px] mr-3" viewBox="0 0 20 14"><path d="M5 13a4.5 4.5 0 010-8.5C7 0 13 0 15 4.5c6 0 6 8.5 1 8.5z" fill="#bbb" /><path d="M6 13c-3 0-4-3-1-4.5l8-4c4 0 7 3 7 5.5 0 2-1.5 3-3 3z" fill="#fff" /></svg>
      <svg className="w-4 h-4 mr-3" viewBox="0 0 16 16" fill="none" stroke="#ddd" strokeWidth="1.3"><path d="M1 15C1 7 7 1 15 1M5 15C5 9 9 5 15 5M9 15c0-3 3-6 6-6" /><circle cx="13.5" cy="13.5" r="2" fill="#fff" stroke="none" /></svg>
      <svg className="w-5 h-4 mr-2.5" viewBox="0 0 20 16" fill="none" stroke="#fff" strokeWidth="1.2"><path d="M1 5.5h3L8 2v12l-4-3.5H1zM10.5 5.5c1.5 1.5 1.5 3.5 0 5M13 3.5c3 3 3 6 0 9" /><path d="M16 1.5c4 4 4 9 0 13" stroke="#888" /></svg>
      <svg className="w-[18px] h-[17px] mr-3" viewBox="0 0 18 17" fill="#fff"><path d="M4.5 0L9 3 4.5 6 0 3zM13.5 0L18 3l-4.5 3L9 3zM4.5 6L9 9l-4.5 3L0 9zM13.5 6L18 9l-4.5 3L9 9zM4.5 13L9 10.5l4.5 2.5L9 16.5z" /></svg>
      <svg className="w-5 h-[14px] mr-[15px]" viewBox="0 0 20 14" fill="none" stroke="#fff" strokeWidth="1.2"><path d="M5 4h13v9H5V9M19.3 6.5v4M1 1v4h3V1M2.5 5v5H5" /><path d="M7 5.5h10v6H7z" fill="#fff" /></svg>
      <div className="w-[66px] text-center text-sm leading-[23px] whitespace-nowrap">
        <div>10:08 AM</div>
        <div>8/6/2020</div>
      </div>
      <button aria-label="Notifications" className="ml-6 relative w-[30px] h-[30px]">
        <svg className="absolute left-0 top-0 w-5 h-5" viewBox="0 0 20 20"><path d="M0 0h20v16h-7l-3 4-3-4H0z" fill="#fff" /><path d="M4 4.5h12M4 8.5h12M4 12.5h7" stroke="#34281f" strokeWidth="1.3" /></svg>
        <span className="absolute right-0 bottom-0 w-5 h-5 rounded-full bg-[#34302e] border border-[#999] text-xs leading-[18px] font-bold">3</span>
      </button>
      <div className="w-px h-full bg-[#7d756f] ml-[15px] mr-[5px]" />
    </div>
  </footer>
);

export default function App() {
  return (
    <div className="h-screen flex flex-col overflow-hidden bg-[#e6e6e6] font-['Open_Sans',sans-serif]">
      <TitleBar />
      <MenuBar />
      <Ribbon />
      <FormulaBar />
      <main className="flex-1 min-h-0 flex">
        <Sheet />
        <VerticalScroll />
      </main>
      <SheetTabs />
      <StatusBar />
      <Taskbar />
    </div>
  );
}
